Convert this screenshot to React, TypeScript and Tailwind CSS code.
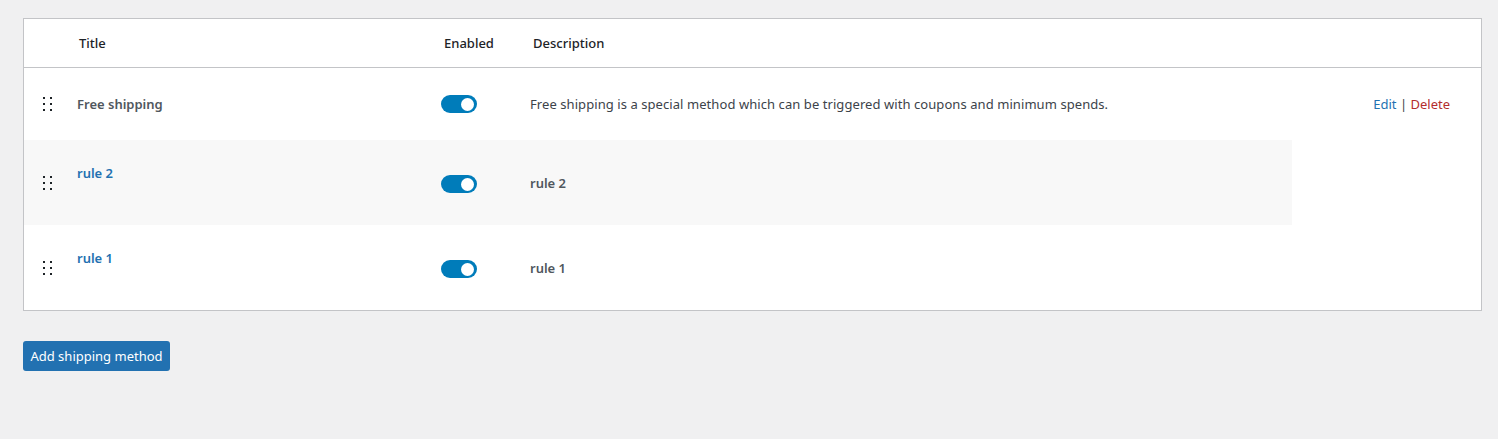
import React from 'react';

interface Method {
  id: number;
  title: string;
  description: string;
  isLink: boolean;
}

const methods: Method[] = [
  {
    id: 1,
    title: 'Free shipping',
    description: 'Free shipping is a special method which can be triggered with coupons and minimum spends.',
    isLink: false,
  },
  { id: 2, title: 'rule 2', description: 'rule 2', isLink: true },
  { id: 3, title: 'rule 1', description: 'rule 1', isLink: true },
];

const cols = 'grid grid-cols-[43px_364px_89px_772px_189px]';

const DragHandle: React.FC = () => (
  <div className="grid grid-cols-[2px_2px] gap-x-[5px] gap-y-[4px] w-fit">
    {Array.from({ length: 6 }).map((_, i) => (
      <span key={i} className="w-[2px] h-[2px] bg-[#1d2327]" />
    ))}
  </div>
);

const Toggle: React.FC = () => (
  <span className="relative inline-flex items-center w-[36px] h-[18px] rounded-full bg-[#007cba]">
    <span className="absolute right-[3px] w-[13px] h-[13px] rounded-full bg-white" />
  </span>
);

const Row: React.FC<{ m: Method; shaded: boolean }> = ({ m, shaded }) => {
  const bg = shaded ? 'bg-[#f8f8f8]' : 'bg-white';
  if (!m.isLink) {
    return (
      <div className={`${cols} h-[72px] items-center`}>
        <div className="flex justify-end pr-[15px]"><DragHandle /></div>
        <div className="pl-[10px] font-semibold text-[#50575e]">{m.title}</div>
        <div className="pl-[10px] flex"><Toggle /></div>
        <div className="pl-[10px] text-[#3c434a] tracking-[0.07px]">{m.description}</div>
        <div className="pr-[31px] text-right">
          <span className="text-[#2271b1]">Edit</span>
          <span className="text-[#3c434a]"> | </span>
          <span className="text-[#b32d2e]">Delete</span>
        </div>
      </div>
    );
  }
  return (
    <div className={`${cols} h-[85px]`}>
      <div className={`${bg} flex items-center justify-end pr-[15px]`}><DragHandle /></div>
      <div className={`${bg} pl-[10px] pt-[24px] font-semibold text-[#2271b1]`}>{m.title}</div>
      <div className={`${bg} pl-[10px] flex items-center pt-[3px]`}><Toggle /></div>
      <div className={`${bg} pl-[10px] flex items-center font-semibold text-[#50575e]`}>{m.description}</div>
      <div className="bg-white" />
    </div>
  );
};

export default function App() {
  return (
    <div className="min-h-[439px] bg-[#f0f0f1] pt-[18px] pl-[23px] text-[13px] font-['Noto_Sans',sans-serif] leading-[18px]">
      <div className="w-[1459px] border border-[#c3c4c7] bg-white">
        <div className={`${cols} h-[49px] items-center border-b border-[#c3c4c7] text-[#1d2327] font-medium`}>
          <div />
          <div className="pl-[12px]">Title</div>
          <div className="pl-[13px]">Enabled</div>
          <div className="pl-[13px]">Description</div>
          <div />
        </div>
        {methods.map((m, i) => (
          <Row key={m.id} m={m} shaded={i === 1} />
        ))}
      </div>
      <button className="mt-[30px] h-[30px] w-[147px] rounded-[3px] bg-[#2271b1] text-white text-[13px]">
        Add shipping method
      </button>
    </div>
  );
}
